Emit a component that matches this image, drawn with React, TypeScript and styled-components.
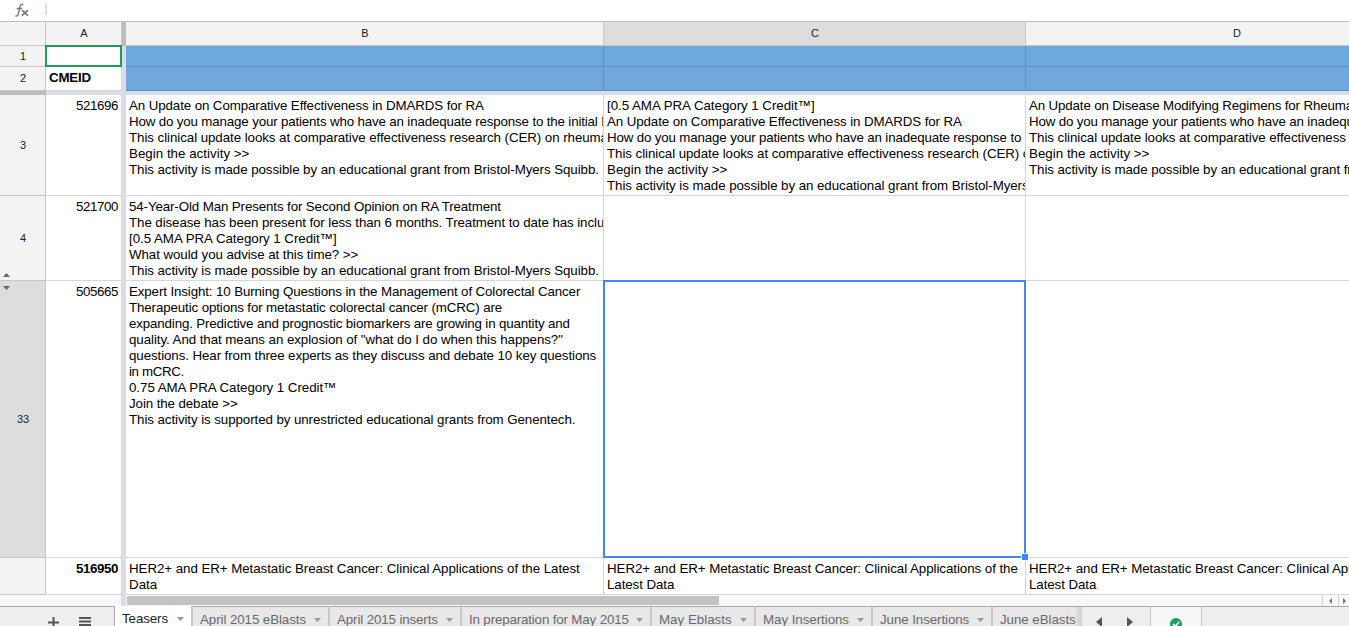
import React from 'react';
import styled, { createGlobalStyle } from 'styled-components';

const GlobalStyle = createGlobalStyle`
  body {
    margin: 0;
    overflow: hidden;
    background: #fff;
    font-family: "Liberation Sans", Arial, sans-serif;
  }
  * { box-sizing: border-box; }
`;

const Screen = styled.div`
  width: 1349px;
  height: 626px;
  overflow: hidden;
  display: flex;
  flex-direction: column;
  background: #fff;
`;

const FormulaBar = styled.div`
  flex: none;
  height: 22px;
  display: flex;
  align-items: flex-start;
  border-bottom: 1px solid #bdbdbd;
`;

const FxIcon = styled.svg`
  width: 16px;
  height: 16px;
  margin: 2px 0 0 14px;
`;

const FormulaDivider = styled.div`
  width: 2px;
  height: 12px;
  margin: 3px 0 0 15px;
  background: linear-gradient(90deg, #f3dfc0 50%, #cfe3f7 50%);
`;

const GridRow = styled.div<{ $h: number }>`
  flex: none;
  display: grid;
  grid-template-columns: 46px 76px 4px 478px 422px 422px;
  height: ${p => p.$h}px;
`;

const HeaderCell = styled.div<{ $active?: boolean; $column?: boolean; $raised?: boolean }>`
  display: flex;
  align-items: center;
  justify-content: center;
  position: relative;
  padding: ${p => (p.$column ? '0 0 2px 1px' : p.$raised ? '0 0 2px 1px' : '0 0 0 1px')};
  font-size: 11px;
  color: #222;
  background: ${p => (p.$active ? '#dddddd' : '#f3f3f3')};
  border-right: 1px solid #c6c6c6;
  border-bottom: 1px solid #c6c6c6;
`;

const Freeze = styled.div<{ $dark?: boolean }>`
  background: ${p => (p.$dark ? '#bcbcbc' : '#d9dde8')};
`;

const FreezeRow = styled.div`
  flex: none;
  height: 4px;
  display: grid;
  grid-template-columns: 46px 1fr;
`;

const Cell = styled.div<{ $fill?: boolean; $right?: boolean; $bold?: boolean }>`
  position: relative;
  min-width: 0;
  padding: 3px 3px 0;
  overflow: hidden;
  font-size: 13.333px;
  line-height: 16px;
  letter-spacing: ${p => (p.$right ? '-0.42px' : '-0.2px')};
  white-space: pre;
  color: #000;
  text-align: ${p => (p.$right ? 'right' : 'left')};
  font-weight: ${p => (p.$bold ? 700 : 400)};
  background: ${p => (p.$fill ? '#6fa8dc' : '#fff')};
  border-right: 1px solid ${p => (p.$fill ? '#5f90bc' : '#d6d6d6')};
  border-bottom: 1px solid ${p => (p.$fill ? '#5f90bc' : '#d6d6d6')};
`;

const SelectedCell = styled(Cell)`
  overflow: visible;
`;

const Outline = styled.div<{ $color: string }>`
  position: absolute;
  inset: -1px;
  border: 2px solid ${p => p.$color};
`;

const Handle = styled.div`
  position: absolute;
  right: -3px;
  bottom: -3px;
  z-index: 2;
  width: 7px;
  height: 7px;
  background: #4285f4;
  border: 1px solid #fff;
  border-width: 1px 0 0 1px;
`;

const Line = styled.div<{ $ls: number }>`
  letter-spacing: ${p => p.$ls}px;
`;

const HiddenMark = styled.svg<{ $top?: boolean }>`
  position: absolute;
  left: 3px;
  ${p => (p.$top ? 'top: 5px;' : 'bottom: 3px;')}
  width: 7px;
  height: 4px;
  fill: #666;
`;

const ScrollRow = styled.div`
  flex: none;
  height: 11px;
  display: flex;
  background: #f8f8f8;
`;

const ScrollLead = styled.div`
  width: 121px;
`;

const ScrollTrack = styled.div`
  flex: 1;
  padding: 1px 0 1px 1px;
`;

const ScrollThumb = styled.div`
  width: 592px;
  height: 9px;
  background: #c2c2c2;
`;

const ScrollButton = styled.div<{ $w: number }>`
  width: ${p => p.$w}px;
  display: flex;
  align-items: center;
  justify-content: center;
  border-left: 1px solid #d0d0d0;
`;

const FreezeTail = styled(Freeze)`
  width: 5px;
`;

const SheetBar = styled.div`
  flex: none;
  height: 20px;
  display: flex;
  background: #eeeeee;
`;

const BarTop = styled.div<{ $w: number; $light?: boolean }>`
  flex: none;
  width: ${p => p.$w}px;
  display: flex;
  border-top: 1px solid #a9a9a9;
  background: ${p => (p.$light ? '#f8f8f8' : '#eeeeee')};
`;

const SheetActions = styled(BarTop)`
  gap: 20px;
  padding: 10px 0 0 48px;
`;

const Tab = styled.div<{ $w: number; $active?: boolean }>`
  flex: none;
  width: ${p => p.$w}px;
  height: 20px;
  padding: 4px 7px 0 7px;
  display: flex;
  justify-content: space-between;
  overflow: hidden;
  white-space: nowrap;
  font-size: 13.333px;
  line-height: 17px;
  color: ${p => (p.$active ? '#222' : '#6a6a6a')};
  background: ${p => (p.$active ? '#fff' : '#e8e8e8')};
  border-left: ${p => (p.$active ? '1px solid #a9a9a9' : '2px solid #c8c8c8')};
  border-top: ${p => (p.$active ? '0' : '1px solid #a9a9a9')};
`;

const Caret = styled.svg`
  flex: none;
  width: 7px;
  height: 4px;
  margin-top: 7px;
  fill: #999;
`;

const TabFade = styled.div`
  flex: none;
  width: 6px;
  border-top: 1px solid #a9a9a9;
  background: linear-gradient(90deg, #dedede, #d2d2d2);
`;

const TabNav = styled(BarTop)`
  gap: 25px;
  padding: 10px 0 0 14px;
`;

const StatusBox = styled(BarTop)`
  justify-content: center;
  padding-top: 11px;
  border-left: 1px solid #c8c8c8;
  border-right: 1px solid #c8c8c8;
`;

type TextLine = [string, number];

const Lines = ({ items }: { items: TextLine[] }) => (
  <>
    {items.map(([text, ls], i) => (
      <Line key={i} $ls={ls}>{text}</Line>
    ))}
  </>
);

const row3B: TextLine[] = [
  ['An Update on Comparative Effectiveness in DMARDS for RA', -0.104],
  ['How do you manage your patients who have an inadequate response to the initial DMARD?', -0.157],
  ['This clinical update looks at comparative effectiveness research (CER) on rheumatoid arthritis', -0.066],
  ['Begin the activity >>', 0.017],
  ['This activity is made possible by an educational grant from Bristol-Myers Squibb.', -0.07],
];

const row3C: TextLine[] = [['[0.5 AMA PRA Category 1 Credit™]', -0.04], ...row3B];

const row3D: TextLine[] = [
  ['An Update on Disease Modifying Regimens for Rheumatoid Arthritis', -0.144],
  ...row3B.slice(1),
];

const row4B: TextLine[] = [
  ['54-Year-Old Man Presents for Second Opinion on RA Treatment', -0.118],
  ['The disease has been present for less than 6 months. Treatment to date has included', -0.089],
  ['[0.5 AMA PRA Category 1 Credit™]', -0.04],
  ['What would you advise at this time? >>', -0.072],
  row3B[4],
];

const row33B: TextLine[] = [
  ['Expert Insight: 10 Burning Questions in the Management of Colorectal Cancer', -0.118],
  ['Therapeutic options for metastatic colorectal cancer (mCRC) are', -0.121],
  ['expanding. Predictive and prognostic biomarkers are growing in quantity and', -0.148],
  ['quality. And that means an explosion of "what do I do when this happens?"', -0.07],
  ['questions. Hear from three experts as they discuss and debate 10 key questions', -0.09],
  ['in mCRC.', -0.36],
  ['0.75 AMA PRA Category 1 Credit™', -0.05],
  ['Join the debate >>', -0.1],
  ['This activity is supported by unrestricted educational grants from Genentech.', -0.082],
];

const lastB: TextLine[] = [
  ['HER2+ and ER+ Metastatic Breast Cancer: Clinical Applications of the Latest', -0.056],
  ['Data', 0],
];

const lastC: TextLine[] = [
  ['HER2+ and ER+ Metastatic Breast Cancer: Clinical Applications of the', -0.06],
  ['Latest Data', -0.08],
];

const tabs: { label: string; w: number; ls: number }[] = [
  { label: 'April 2015 eBlasts', w: 137, ls: -0.08 },
  { label: 'April 2015 inserts', w: 132, ls: -0.12 },
  { label: 'In preparation for May 2015', w: 190, ls: -0.15 },
  { label: 'May Eblasts', w: 104, ls: 0 },
  { label: 'May Insertions', w: 117, ls: -0.05 },
  { label: 'June Insertions', w: 120, ls: -0.08 },
];

export default function App() {
  return (
    <Screen>
      <GlobalStyle />
      <FormulaBar>
        <FxIcon viewBox="0 0 16 16" fill="none" stroke="#777" strokeWidth="1.4">
          <path d="M9.4 2.7C7.2 1.9 6.3 3 5.9 5L4.3 12C3.9 13.8 3 14.3 1.4 13.8M2.6 6.5H8.2" />
          <path d="M7.9 8.2L13.9 13.6M13.9 8.2L7.9 13.6" strokeWidth="1.8" />
        </FxIcon>
        <FormulaDivider />
      </FormulaBar>

      <GridRow $h={24}>
        <HeaderCell />
        <HeaderCell $column>A</HeaderCell>
        <Freeze $dark />
        <HeaderCell $column>B</HeaderCell>
        <HeaderCell $column $active>C</HeaderCell>
        <HeaderCell $column>D</HeaderCell>
      </GridRow>
      <GridRow $h={21}>
        <HeaderCell>1</HeaderCell>
        <SelectedCell><Outline $color="#1f9d58" /></SelectedCell>
        <Freeze />
        <Cell $fill />
        <Cell $fill />
        <Cell $fill />
      </GridRow>
      <GridRow $h={24}>
        <HeaderCell $raised>2</HeaderCell>
        <Cell $bold>CMEID</Cell>
        <Freeze />
        <Cell $fill />
        <Cell $fill />
        <Cell $fill />
      </GridRow>
      <FreezeRow>
        <Freeze $dark />
        <Freeze />
      </FreezeRow>
      <GridRow $h={101}>
        <HeaderCell>3</HeaderCell>
        <Cell $right>521696</Cell>
        <Freeze />
        <Cell><Lines items={row3B} /></Cell>
        <Cell><Lines items={row3C} /></Cell>
        <Cell><Lines items={row3D} /></Cell>
      </GridRow>
      <GridRow $h={85}>
        <HeaderCell>
          4
          <HiddenMark viewBox="0 0 7 4"><path d="M0 4L3.5 0L7 4Z" /></HiddenMark>
        </HeaderCell>
        <Cell $right>521700</Cell>
        <Freeze />
        <Cell><Lines items={row4B} /></Cell>
        <Cell />
        <Cell />
      </GridRow>
      <GridRow $h={277}>
        <HeaderCell $active>
          33
          <HiddenMark $top viewBox="0 0 7 4"><path d="M0 0H7L3.5 4Z" /></HiddenMark>
        </HeaderCell>
        <Cell $right>505665</Cell>
        <Freeze />
        <Cell><Lines items={row33B} /></Cell>
        <SelectedCell>
          <Outline $color="#4285f4" />
          <Handle />
        </SelectedCell>
        <Cell />
      </GridRow>
      <GridRow $h={37}>
        <HeaderCell />
        <Cell $right $bold>516950</Cell>
        <Freeze />
        <Cell><Lines items={lastB} /></Cell>
        <Cell><Lines items={lastC} /></Cell>
        <Cell><Lines items={lastC} /></Cell>
      </GridRow>

      <ScrollRow>
        <ScrollLead />
        <FreezeTail />
        <ScrollTrack><ScrollThumb /></ScrollTrack>
        <ScrollButton $w={16}>
          <svg width="4" height="6" viewBox="0 0 4 6" fill="#777"><path d="M3 0V6L0 3Z" /></svg>
        </ScrollButton>
        <ScrollButton $w={11}>
          <svg width="4" height="6" viewBox="-1 0 4 6" fill="#777"><path d="M0 0V6L3 3Z" /></svg>
        </ScrollButton>
      </ScrollRow>

      <SheetBar>
        <SheetActions $w={114}>
          <svg width="11" height="11" viewBox="0 0 11 11" fill="#555"><path d="M4.5 0H6.5V4.5H11V6.5H6.5V11H4.5V6.5H0V4.5H4.5Z" /></svg>
          <svg width="12" height="9" viewBox="0 0 12 9" fill="#555"><path d="M0 0H12V2H0ZM0 3.5H12V5.5H0ZM0 7H12V9H0Z" /></svg>
        </SheetActions>
        <Tab $w={77} $active>
          <Line $ls={-0.1}>Teasers</Line>
          <Caret viewBox="0 0 7 4"><path d="M0 0H7L3.5 4Z" /></Caret>
        </Tab>
        {tabs.map(t => (
          <Tab key={t.label} $w={t.w}>
            <Line $ls={t.ls}>{t.label}</Line>
            <Caret viewBox="0 0 7 4"><path d="M0 0H7L3.5 4Z" /></Caret>
          </Tab>
        ))}
        <Tab $w={85}><Line $ls={-0.05}>June eBlasts</Line></Tab>
        <TabFade />
        <TabNav $w={68}>
          <svg width="6" height="10" viewBox="0 0 6 10" fill="#555"><path d="M6 0V10L0 5Z" /></svg>
          <svg width="6" height="10" viewBox="0 0 6 10" fill="#555"><path d="M0 0V10L6 5Z" /></svg>
        </TabNav>
        <StatusBox $w={52} $light>
          <svg width="12" height="12" viewBox="0 0 12 12">
            <circle cx="6" cy="6" r="6" fill="#17a35c" />
            <path d="M3 6.2L5.2 8.3L9.2 3.8" fill="none" stroke="#fff" strokeWidth="1.6" />
          </svg>
        </StatusBox>
        <BarTop $w={148} />
      </SheetBar>
    </Screen>
  );
}
